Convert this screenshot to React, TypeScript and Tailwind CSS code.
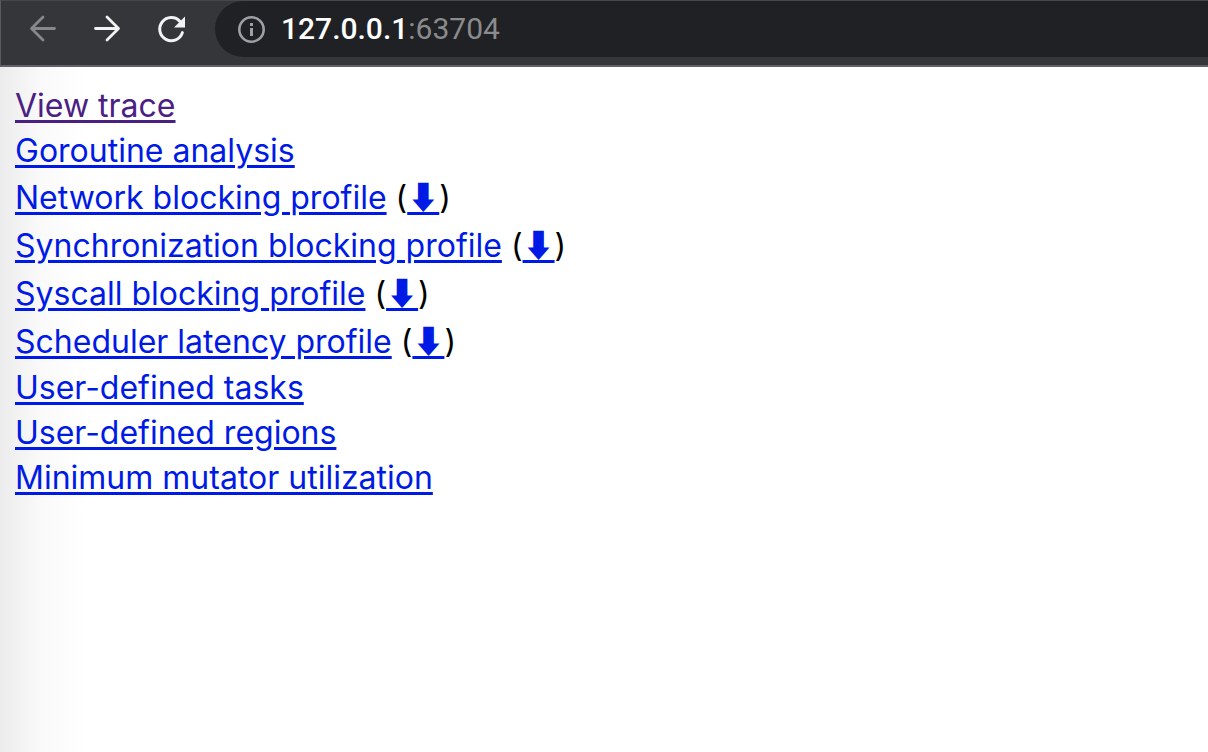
const profiles = [
  { label: 'View trace', href: '#trace', visited: true },
  { label: 'Goroutine analysis', href: '#goroutines' },
  { label: 'Network blocking profile', href: '#io', download: true },
  { label: 'Synchronization blocking profile', href: '#block', download: true },
  { label: 'Syscall blocking profile', href: '#syscall', download: true },
  { label: 'Scheduler latency profile', href: '#sched', download: true },
  { label: 'User-defined tasks', href: '#usertasks' },
  { label: 'User-defined regions', href: '#userregions' },
  { label: 'Minimum mutator utilization', href: '#mmu' },
]

function BackIcon() {
  return (
    <svg viewBox="0 0 32 32" className="size-8" fill="none" stroke="currentColor" strokeWidth="2.8" strokeLinecap="round" strokeLinejoin="round" aria-hidden="true">
      <path d="M27.5 15.5H5M16 4L4.5 15.5L16 27" />
    </svg>
  )
}

function ForwardIcon() {
  return (
    <svg viewBox="0 0 32 32" className="size-8" fill="none" stroke="currentColor" strokeWidth="2.8" strokeLinecap="round" strokeLinejoin="round" aria-hidden="true">
      <path d="M4.5 15.5H27M16 4L27.5 15.5L16 27" />
    </svg>
  )
}

function ReloadIcon() {
  return (
    <svg viewBox="0 0 32 32" className="size-8" aria-hidden="true">
      <path d="M25 8.4A11.6 11.6 0 1 0 27.4 19.6" fill="none" stroke="currentColor" strokeWidth="3" strokeLinecap="round" />
      <path d="M30 3.5V14.5H19Z" fill="currentColor" />
    </svg>
  )
}

function InfoIcon() {
  return (
    <svg viewBox="0 0 28 28" className="size-7" aria-hidden="true">
      <circle cx="14.5" cy="14.5" r="12.2" fill="none" stroke="currentColor" strokeWidth="2.6" />
      <path d="M13 8h3v3h-3zM13 13h3v8h-3z" fill="currentColor" />
    </svg>
  )
}

function Toolbar() {
  return (
    <header className="flex border-t border-b-2 border-l border-t-[#46474b] border-b-[#626166] border-l-[#5a5b5f] bg-[#35363a] pb-2 pl-[26px]">
      <nav className="flex items-center gap-8">
        <button aria-label="Back" className="text-[#87888a]">
          <BackIcon />
        </button>
        <button aria-label="Forward" className="text-[#f1f3f4]">
          <ForwardIcon />
        </button>
        <button aria-label="Reload" className="text-[#f1f3f4]">
          <ReloadIcon />
        </button>
      </nav>
      <div className="ml-7 flex h-14 flex-1 items-center gap-4 rounded-l-full bg-[#202124] pl-[22px] font-['Roboto','Liberation_Sans',sans-serif] text-[30px] leading-8">
        <button aria-label="Site information" className="text-[#9aa0a6]">
          <InfoIcon />
        </button>
        <div className="text-[#8a8b8d]">
          <span className="font-medium text-white">127.0.0.1</span>:63704
        </div>
      </div>
    </header>
  )
}

export default function App() {
  return (
    <div className="flex min-h-screen flex-col bg-white">
      <Toolbar />
      <main className="flex-1 bg-linear-to-r from-[#ececec] via-[#fafafa] via-[42px] to-white to-[86px] px-[15px] py-4 font-['Inter','Noto_Sans_CJK_SC',sans-serif] text-[32px] leading-[45px]">
        <ul>
          {profiles.map(({ label, href, visited, download }) => (
            <li key={href} className={download ? 'pt-0.5 pb-px' : ''}>
              <a href={href} className={`underline decoration-[3px] underline-offset-3 ${visited ? 'text-[#4b2083]' : 'text-[#001ae5]'}`}>
                {label}
              </a>
              {download && (
                <>
                  {' ('}
                  <a href={`${href}-raw`} className="text-[#001ae5] underline decoration-[3px] underline-offset-3">
                    ⬇
                  </a>
                  )
                </>
              )}
            </li>
          ))}
        </ul>
      </main>
    </div>
  )
}
